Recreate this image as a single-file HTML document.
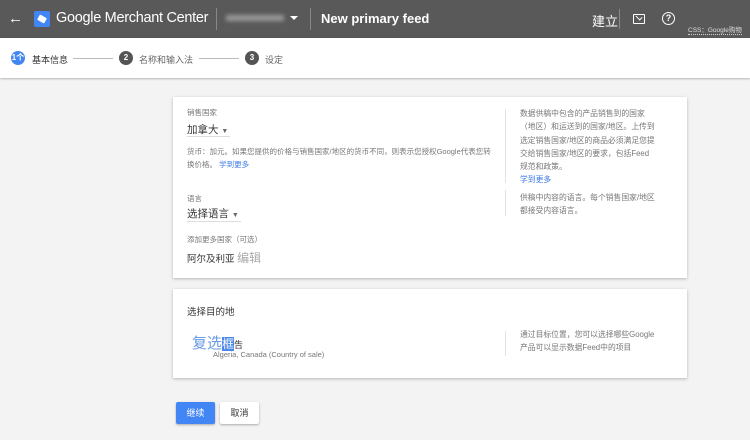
<!DOCTYPE html>
<html><head><meta charset="utf-8"><style>
*{margin:0;padding:0;box-sizing:border-box}
body{width:750px;height:440px;overflow:hidden;background:#f3f3f3;font-family:"Liberation Sans","Noto Sans CJK SC",sans-serif;position:relative}
.abs{position:absolute}
#hd{left:0;top:0;width:750px;height:38px;background:#595959;color:#fff}
#steps{left:0;top:38px;width:750px;height:40px;background:#fff;box-shadow:0 1px 2px rgba(0,0,0,.25)}
.circ{width:14px;height:14px;border-radius:50%;color:#fff;font-size:8px;text-align:center;line-height:14px;font-weight:bold}
.card{background:#fff;box-shadow:0 1px 3px rgba(0,0,0,.25)}
.s{font-size:7.5px;color:#777}
.line{height:1px;background:#bbb}
</style></head><body>
<div id="hd" class="abs">
 <div class="abs" style="left:8px;top:10px;font-size:15px">←</div>
 <div class="abs" style="left:34px;top:11px;width:16px;height:16px;background:#4285f4;border-radius:2px"><div style="position:absolute;left:4px;top:5px;width:8px;height:6px;background:#fff;transform:rotate(30deg);border-radius:1px"></div></div>
 <div class="abs" style="left:56px;top:10px;font-size:14.5px;letter-spacing:-0.3px">Google Merchant Center</div>
 <div class="abs" style="left:216px;top:8px;width:1px;height:22px;background:#888"></div>
 <div class="abs" style="left:226px;top:15px;width:58px;height:6px;background:#999;filter:blur(2px)"></div>
 <div class="abs" style="left:290px;top:16px;border:4px solid transparent;border-top-color:#fff"></div>
 <div class="abs" style="left:310px;top:8px;width:1px;height:22px;background:#888"></div>
 <div class="abs" style="left:321px;top:11px;font-size:13px;font-weight:bold">New primary feed</div>
 <div class="abs" style="left:592px;top:11px;font-size:13px">建立</div>
 <div class="abs" style="left:619px;top:9px;width:1px;height:20px;background:#888"></div>
 <div class="abs" style="left:633px;top:14px;width:12px;height:10px;border:1.5px solid #fff;border-radius:1px"></div>
 <div class="abs" style="left:636px;top:15px;width:6px;height:4px;border-right:1.5px solid #fff;border-bottom:1.5px solid #fff;transform:rotate(45deg)"></div>
 <div class="abs" style="left:662px;top:12px;width:13px;height:13px;border:1.5px solid #fff;border-radius:50%;font-size:9px;text-align:center;line-height:10px;font-weight:bold">?</div>
 <div class="abs" style="left:688px;top:24px;font-size:6.5px;color:#ddd;border-bottom:1px dotted #ccc;white-space:nowrap">CSS：Google购物</div>
</div>
<div id="steps" class="abs">
 <div class="abs circ" style="left:11px;top:13px;background:#4285f4">1个</div>
 <div class="abs" style="left:32px;top:15px;font-size:9px;color:#333">基本信息</div>
 <div class="abs line" style="left:73px;top:20px;width:40px"></div>
 <div class="abs circ" style="left:119px;top:13px;background:#555">2</div>
 <div class="abs" style="left:139px;top:15px;font-size:9px;color:#666">名称和输入法</div>
 <div class="abs line" style="left:199px;top:20px;width:40px"></div>
 <div class="abs circ" style="left:245px;top:13px;background:#555">3</div>
 <div class="abs" style="left:265px;top:15px;font-size:9px;color:#666">设定</div>
</div>
<div class="abs card" style="left:173px;top:97px;width:514px;height:181px">
 <div class="abs s" style="left:14px;top:10px">销售国家</div>
 <div class="abs" style="left:14px;top:25px;font-size:10.5px;color:#333">加拿大 <span style="font-size:7px;color:#666">▼</span></div>
 <div class="abs" style="left:14px;top:39px;width:43px;height:1px;background:#ddd"></div>
 <div class="abs s" style="left:14px;top:48px;width:305px;line-height:13px">货币：加元。如果您提供的价格与销售国家/地区的货币不同，则表示您授权Google代表您转换价格。 <span style="color:#3b78e7">学到更多</span></div>
 <div class="abs s" style="left:14px;top:96px">语言</div>
 <div class="abs" style="left:14px;top:109px;font-size:10.5px;color:#333">选择语言 <span style="font-size:7px;color:#666">▼</span></div>
 <div class="abs" style="left:14px;top:124px;width:54px;height:1px;background:#ddd"></div>
 <div class="abs s" style="left:14px;top:137px">添加更多国家（可选）</div>
 <div class="abs" style="left:14px;top:152px;font-size:9.5px;color:#333">阿尔及利亚 <span style="font-size:12px;color:#aaa">编辑</span></div>
 <div class="abs" style="left:332px;top:12px;width:1px;height:74px;background:#e3e3e3"></div>
 <div class="abs s" style="left:347px;top:10px;width:135px;line-height:13.3px;font-size:7.8px">数据供稿中包含的产品销售到的国家（地区）和运送到的国家/地区。上传到选定销售国家/地区的商品必须满足您提交给销售国家/地区的要求，包括Feed规范和政策。<br><span style="color:#3b78e7">学到更多</span></div>
 <div class="abs" style="left:332px;top:93px;width:1px;height:26px;background:#e3e3e3"></div>
 <div class="abs s" style="left:347px;top:94px;width:135px;line-height:13px;font-size:7.8px">供稿中内容的语言。每个销售国家/地区都接受内容语言。</div>
</div>
<div class="abs card" style="left:173px;top:289px;width:514px;height:89px">
 <div class="abs" style="left:14px;top:15px;font-size:9.5px;color:#333">选择目的地</div>
 <div class="abs" style="left:19px;top:43px;font-size:15px;color:#6a9be8">复选<span style="background:#4a86e8;color:#fff;font-size:12px">框</span><span style="font-size:9px;color:#333">告</span></div>
 <div class="abs s" style="left:40px;top:61px">Algeria, Canada (Country of sale)</div>
 <div class="abs" style="left:332px;top:42px;width:1px;height:25px;background:#e3e3e3"></div>
 <div class="abs s" style="left:347px;top:39px;width:135px;line-height:13px;font-size:7.8px">通过目标位置，您可以选择哪些Google产品可以显示数据Feed中的项目</div>
</div>
<div class="abs" style="left:176px;top:402px;width:39px;height:22px;background:#4285f4;color:#fff;font-size:9px;text-align:center;line-height:22px;box-shadow:0 1px 2px rgba(0,0,0,.3);border-radius:2px">继续</div>
<div class="abs" style="left:220px;top:402px;width:39px;height:22px;background:#fff;color:#333;font-size:9px;text-align:center;line-height:22px;box-shadow:0 1px 2px rgba(0,0,0,.3);border-radius:2px">取消</div>
</body></html>
